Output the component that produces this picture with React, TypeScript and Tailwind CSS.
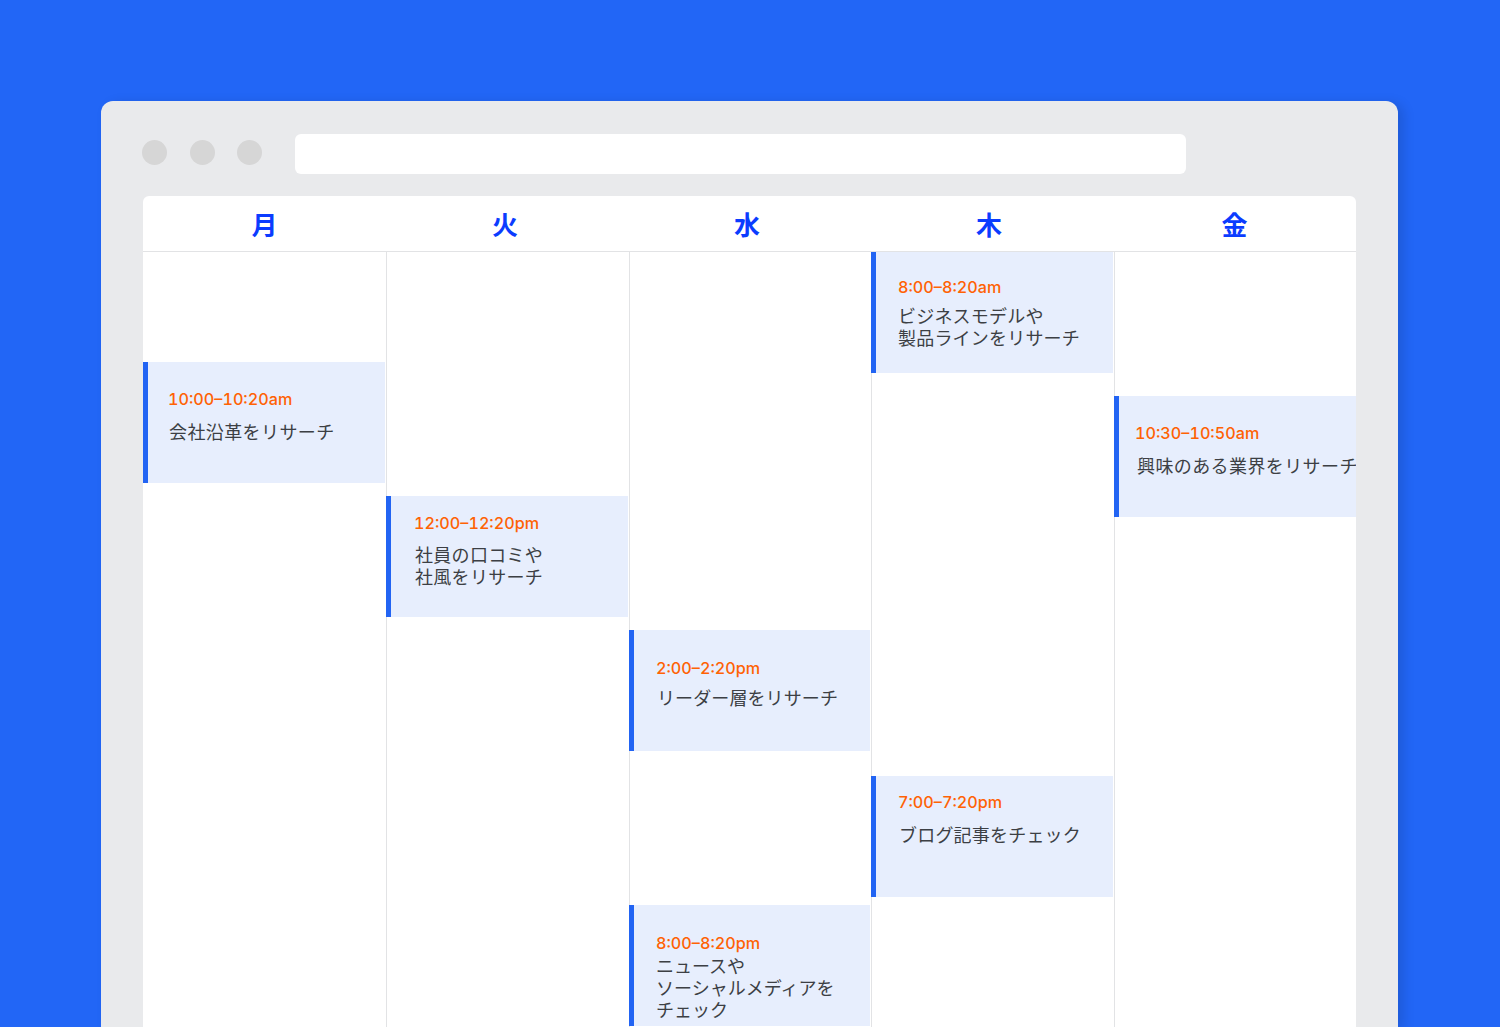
const DAYS = [
  { label: "月", className: "" },
  { label: "火", className: "pr-[5px]" },
  { label: "水", className: "pr-[6px]" },
  { label: "木", className: "pr-[7px]" },
  { label: "金", className: "pr-[1px]" },
];

type CalendarEvent = {
  time: string;
  lines: string[];
  className: string;
  textClass: string;
};

const COLUMNS: CalendarEvent[][] = [
  [
    {
      time: "10:00–10:20am",
      lines: ["会社沿革をリサーチ"],
      className: "mt-[110px] mr-px pl-[20px] pt-[25px]",
      textClass: "mt-[9px] ml-[1px] tracking-[0.4px]",
    },
  ],
  [
    {
      time: "12:00–12:20pm",
      lines: ["社員の口コミや", "社風をリサーチ"],
      className: "mt-[244px] -ml-px mr-px pl-[23px] pt-[15px]",
      textClass: "mt-[8px] ml-[1px] tracking-[0.3px]",
    },
  ],
  [
    {
      time: "2:00–2:20pm",
      lines: ["リーダー層をリサーチ"],
      className: "mt-[378px] -ml-px mr-px pl-[22px] pt-[26px]",
      textClass: "mt-[6px] ml-[1px] tracking-[0.1px]",
    },
    {
      time: "8:00–8:20pm",
      lines: ["ニュースや", "ソーシャルメディアを", "チェック"],
      className: "mt-[154px] -ml-px mr-px pl-[22px] pt-[26px]",
      textClass: "-mt-px tracking-[0px]",
    },
  ],
  [
    {
      time: "8:00–8:20am",
      lines: ["ビジネスモデルや", "製品ラインをリサーチ"],
      className: "mt-0 -ml-px mr-px pl-[22px] pt-[23px]",
      textClass: "mt-[5px] tracking-[0.2px]",
    },
    {
      time: "7:00–7:20pm",
      lines: ["ブログ記事をチェック"],
      className: "mt-[403px] -ml-px mr-px pl-[22px] pt-[14px]",
      textClass: "mt-[9px] ml-[1px] tracking-[0.2px]",
    },
  ],
  [
    {
      time: "10:30–10:50am",
      lines: ["興味のある業界をリサーチ"],
      className: "mt-[144px] -ml-px pl-[16px] pt-[25px]",
      textClass: "mt-[9px] ml-[2px] tracking-[0.4px]",
    },
  ],
];

function EventCard({ event }: { event: CalendarEvent }) {
  return (
    <div
      className={`h-[121px] shrink-0 overflow-hidden border-l-[5px] border-[#2264f3] bg-[#e7eefd] ${event.className}`}
    >
      <div className="font-['Inter',sans-serif] text-[16.2px] font-medium tabular-nums leading-[24px] text-[#ff6204]">
        {event.time}
      </div>
      <div
        className={`whitespace-nowrap font-['Noto_Sans_CJK_JP',sans-serif] text-[18px] font-normal leading-[22px] text-[#3c3f44] ${event.textClass}`}
      >
        {event.lines.map((line) => (
          <div key={line}>{line}</div>
        ))}
      </div>
    </div>
  );
}

export default function App() {
  return (
    <div className="h-[1027px] w-[1500px] overflow-hidden bg-[#2266f6] px-[101px] pt-[101px]">
      <div className="h-[926px] w-[1297px] overflow-hidden rounded-t-[12px] bg-[#e9eaec] px-[42px] shadow-[6px_2px_12px_rgba(0,0,0,0.12)]">
        <div className="flex h-[95px] items-start gap-[33px] pt-[33px]">
          <div className="-ml-px mt-[6px] flex gap-[22.5px]">
            <span className="h-[25px] w-[25px] rounded-full bg-[#d6d6d6]" />
            <span className="h-[25px] w-[25px] rounded-full bg-[#d6d6d6]" />
            <span className="h-[25px] w-[25px] rounded-full bg-[#d6d6d6]" />
          </div>
          <div className="h-[40px] w-[891px] rounded-[6px] bg-white" />
        </div>
        <div className="h-[831px] w-[1213px] overflow-hidden rounded-t-[6px] bg-white">
          <div className="grid h-[56px] grid-cols-[243px_243px_242px_243px_242px] border-b border-[#e2e3e5]">
            {DAYS.map((day) => (
              <div
                key={day.label}
                className={`flex items-center justify-center pt-[1px] font-['Noto_Sans_CJK_JP',sans-serif] text-[26px] font-bold leading-none text-[#0b3cff] ${day.className}`}
              >
                {day.label}
              </div>
            ))}
          </div>
          <div className="grid h-[775px] grid-cols-[243px_243px_242px_243px_242px]">
            {COLUMNS.map((events, i) => (
              <div
                key={i}
                className="flex flex-col border-l border-[#e2e3e5] first:border-l-0"
              >
                {events.map((event) => (
                  <EventCard key={event.time} event={event} />
                ))}
              </div>
            ))}
          </div>
        </div>
      </div>
    </div>
  );
}
